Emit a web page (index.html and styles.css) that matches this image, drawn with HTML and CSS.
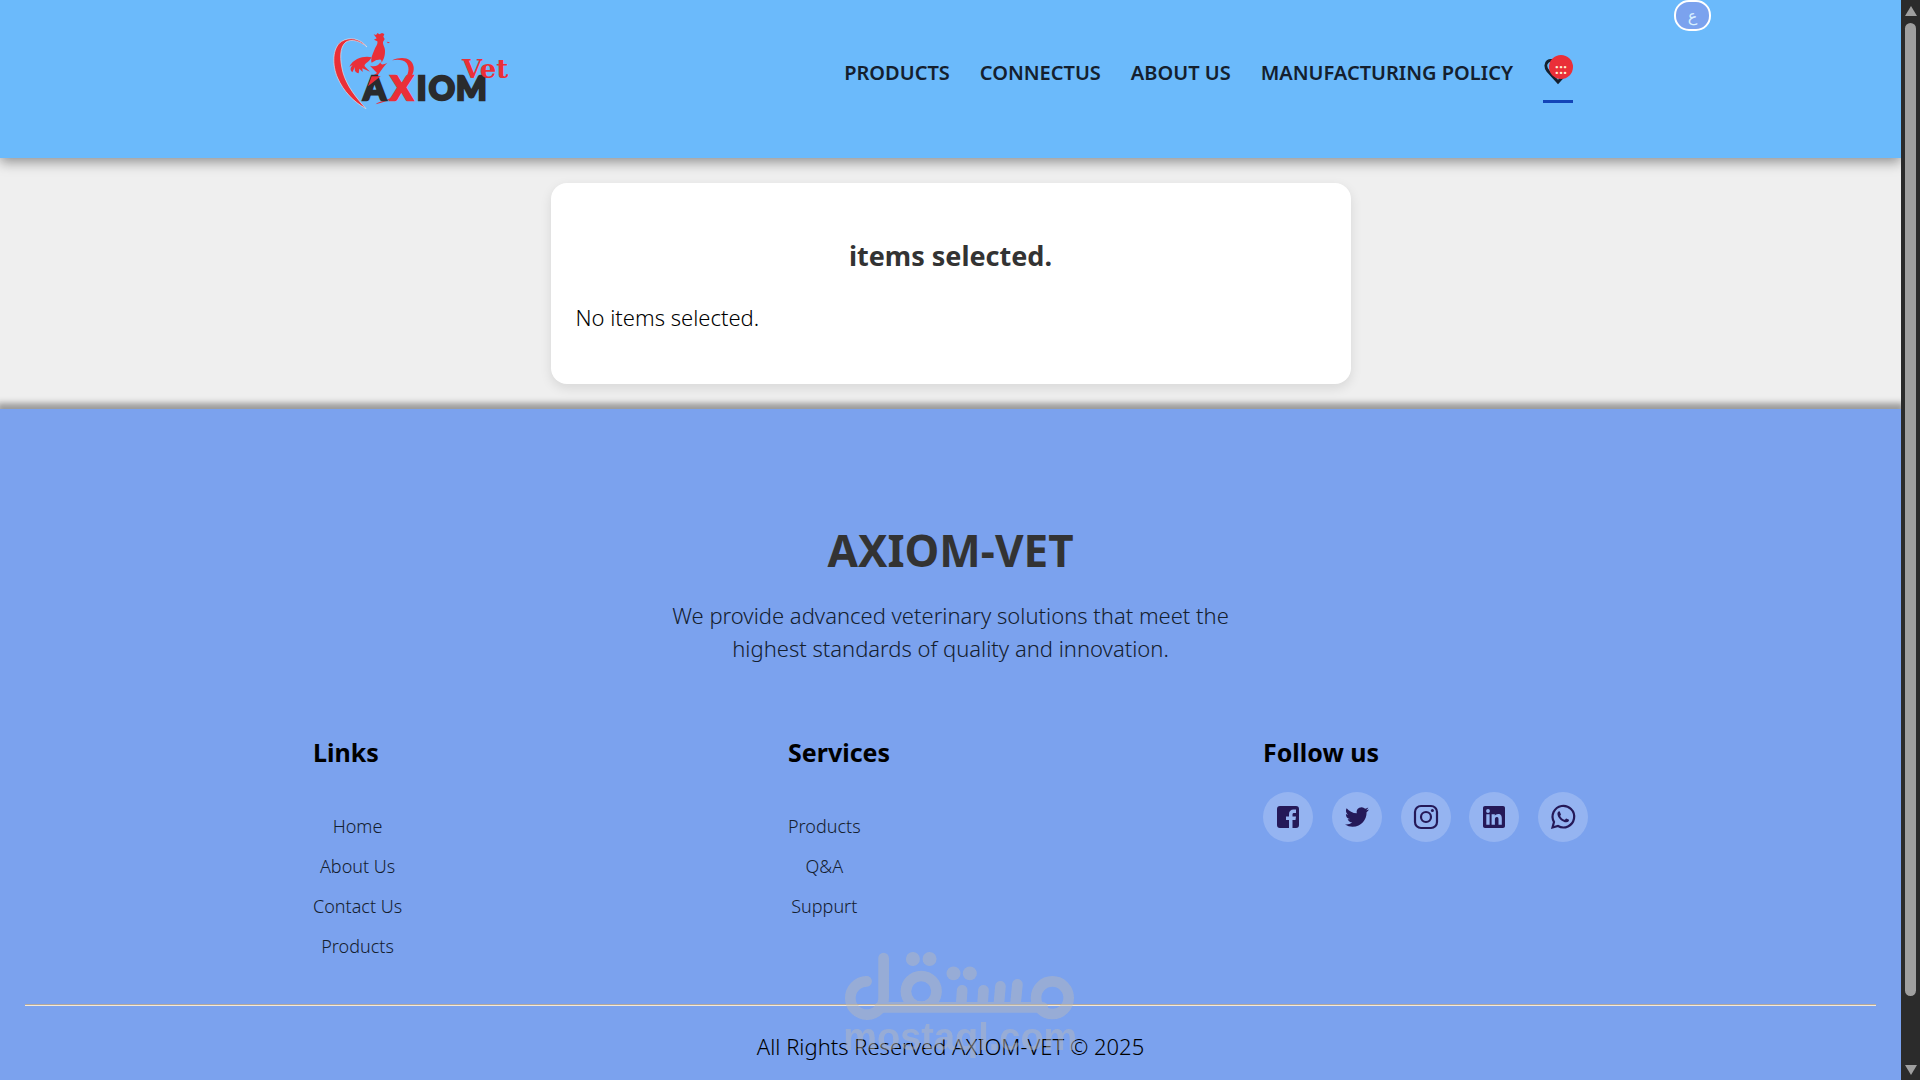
FILE: index.html
```html
<!DOCTYPE html>
<html lang="en">
<head>
<meta charset="utf-8">
<meta name="viewport" content="width=device-width, initial-scale=1">
<title>AXIOM-VET</title>
<link rel="stylesheet" href="styles.css">
</head>
<body>
<div class="page">
  <header class="header">
    <button class="lang" type="button" lang="ar">ع</button>
    <div class="container header-row">
      <a class="logo" href="#" aria-label="Axiom Vet">
        <svg viewBox="57 51 555 255" role="img" aria-hidden="true">
          <path d="M171 111C150 84 118 80 95 94C66 113 66 166 83 204C100 243 130 275 168 296C138 262 111 229 99 188C89 149 88 111 108 96C125 86 149 92 171 111Z" fill="#ea2f38" stroke="#dfe6ee" stroke-width="2"/>
          <path d="M191 73L198 75L203 69L208 73L216 69L223 72L220 80L224 87L219 96C218 106 226 112 225 124C225 141 220 149 215 158C214 143 208 151 199 150L185 158C181 148 187 134 193 120C198 108 204 103 202 94L192 89L200 85Z" fill="#ea2f38"/>
          <path d="M230 95L240 97L234 100Z" fill="#ea2f38"/>
          <path d="M185 142C163 137 132 144 118 170L128 165C119 175 121 181 127 187L135 171C133 182 136 188 146 190L148 176L158 186L157 175L180 185L166 171C157 163 177 158 185 142Z" fill="#ea2f38"/>
          <path d="M180 167C193 171 205 169 211 157C213 167 222 163 232 158C221 169 214 181 203 196L174 229L188 197L201 189Z" fill="#ea2f38"/>
          <path d="M246 151C276 137 307 143 311 171C313 190 302 203 290 218L282 210C296 193 300 175 290 160C281 149 263 148 246 151Z" fill="#ea2f38"/>
          <path d="M197 283C209 270 229 276 245 260L252 263C235 274 216 276 197 283Z" fill="#ea2f38"/>
          <g class="logo-name">
            <text x="160" y="269">A</text>
            <text x="242" y="269" class="logo-red">X</text>
            <text x="320" y="269">I</text>
            <text x="356" y="269">O</text>
            <text x="438" y="269">M</text>
          </g>
          <path d="M174 229L185 199H212Z" fill="#ea2f38"/>
          <text x="456" y="204" class="logo-vet">Vet</text>
        </svg>
      </a>
      <nav class="nav" aria-label="Main">
        <a href="#">PRODUCTS</a>
        <a href="#">CONNECTUS</a>
        <a href="#">ABOUT US</a>
        <a href="#">MANUFACTURING POLICY</a>
        <a class="saved" href="#" aria-label="Selected items">
          <svg viewBox="0 0 30 30" aria-hidden="true"><path d="M15 26L5 15C-1 7 7 0 15 8C23 0 31 7 25 15Z" fill="none" stroke="#14202e" stroke-width="3"/></svg>
          <span class="badge">:::</span>
        </a>
      </nav>
    </div>
  </header>

  <main class="main">
    <section class="card">
      <h2>items selected.</h2>
      <p>No items selected.</p>
    </section>
  </main>

  <footer class="footer">
    <div class="intro">
      <h2>AXIOM-VET</h2>
      <p>We provide advanced veterinary solutions that meet the highest standards of quality and innovation.</p>
    </div>
    <div class="container columns">
      <section>
        <h3>Links</h3>
        <ul class="links">
          <li><a href="#">Home</a></li>
          <li><a href="#">About Us</a></li>
          <li><a href="#">Contact Us</a></li>
          <li><a href="#">Products</a></li>
        </ul>
      </section>
      <section>
        <h3>Services</h3>
        <ul class="links">
          <li><a href="#">Products</a></li>
          <li><a href="#">Q&amp;A</a></li>
          <li><a href="#">Suppurt</a></li>
        </ul>
      </section>
      <section>
        <h3>Follow us</h3>
        <div class="social">
          <a href="#" aria-label="Facebook"><svg viewBox="0 0 24 24"><path fill-rule="evenodd" d="M20 1H4C2 1 1 2 1 4V20C1 22 2 23 4 23H13V15H10V11.500H13V9C13 6 15 4.500 17.500 4.500H20V8H18C17 8 16.500 8.500 16.500 9.500V11.500H20L19.500 15H16.500V23H20C22 23 23 22 23 20V4C23 2 22 1 20 1Z"/></svg></a>
          <a href="#" aria-label="Twitter"><svg viewBox="0 0 24 24"><path d="M23.950 4.570a10 10 0 0 1-2.820.770 4.960 4.960 0 0 0 2.160-2.720c-.950.550-2 .960-3.130 1.180a4.920 4.920 0 0 0-8.380 4.480C7.690 8.090 4.070 6.130 1.640 3.160a4.820 4.820 0 0 0-.670 2.480c0 1.710.870 3.210 2.190 4.100a4.900 4.900 0 0 1-2.230-.620v.060a4.920 4.920 0 0 0 3.950 4.830 5 5 0 0 1-2.210.080 4.940 4.940 0 0 0 4.600 3.420A9.870 9.870 0 0 1 0 19.540a13.990 13.990 0 0 0 7.560 2.210c9.050 0 14-7.500 14-13.980 0-.210 0-.420-.020-.630a9.940 9.940 0 0 0 2.460-2.550z"/></svg></a>
          <a href="#" aria-label="Instagram"><svg viewBox="0 0 24 24"><g fill="none" stroke="currentColor" stroke-width="2.200"><rect x="1" y="1" width="22" height="22" rx="6"/><circle cx="12" cy="12" r="5"/></g><circle cx="18.400" cy="5.600" r="1.500"/></svg></a>
          <a href="#" aria-label="LinkedIn"><svg viewBox="0 0 24 24"><path fill-rule="evenodd" d="M3 1H21C22.200 1 23 1.800 23 3V21C23 22.200 22.200 23 21 23H3C1.800 23 1 22.200 1 21V3C1 1.800 1.800 1 3 1ZM4.300 9.300H7.600V19.800H4.300ZM6 4.100A1.900 1.900 0 1 0 6 7.900A1.900 1.900 0 1 0 6 4.100ZM9.600 9.300H12.800V10.800C13.500 9.700 14.600 9 16.100 9C19.100 9 19.800 11 19.800 13.600V19.800H16.500V14.400C16.500 13 16.400 11.900 14.900 11.900C13.400 11.900 12.900 13 12.900 14.400V19.800H9.600Z"/></svg></a>
          <a href="#" aria-label="WhatsApp"><svg viewBox="0 0 24 24"><path d="M1.500 22.500L3 17A10.800 10.800 0 1 1 7 21Z" fill="none" stroke="currentColor" stroke-width="2.200"/><path d="M8.600 6.200C8 5.900 6.500 6.600 6.400 8.700C6.500 13 11.500 17.300 15.300 17.300C17.300 17.200 18.200 15.800 18 14.700L15.300 13.400C14.500 13.700 14.300 14.800 13.500 14.800C11.600 14.300 9.700 12.400 9.200 11C9.200 10.300 10.100 9.900 9.900 9.200Z"/></svg></a>
        </div>
      </section>
    </div>
    <div class="legal">
      <hr>
      <p>All Rights Reserved AXIOM-VET © 2025</p>
    </div>
  </footer>
</div>

<div class="scrollbar" aria-hidden="true">
  <span class="arrow up"></span>
  <span class="thumb"></span>
  <span class="arrow down"></span>
</div>

<svg class="watermark" viewBox="310 60 700 330" aria-hidden="true">
  <g fill="none" stroke="#bababa" stroke-width="32" stroke-linecap="round">
    <path d="M432 84V203A50 50 0 1 1 381 154"/>
    <circle cx="545" cy="184" r="46"/>
    <circle cx="939" cy="203" r="49"/>
    <path d="M420 232H910M668 181L665 225M732 181L729 225M783 169L778 225M834 163L828 225"/>
  </g>
  <g fill="#bababa">
    <circle cx="520" cy="87" r="21"/><circle cx="570" cy="87" r="21"/>
    <circle cx="642" cy="130" r="21"/><circle cx="691" cy="130" r="21"/>
    <text x="311" y="360">mostaql.com</text>
  </g>
</svg>
</body>
</html>
```
FILE: styles.css
```css
* {
  box-sizing: border-box;
}

body {
  display: flex;
  height: 100vh;
  margin: 0;
  overflow: hidden;
  background: #efefef;
  color: #000;
  font: 300 22px/33px "Noto Sans", "Open Sans", sans-serif;
}

h2, h3, p, ul {
  margin: 0;
  padding: 0;
}

a {
  color: inherit;
  text-decoration: none;
}

.page {
  flex: 1;
  display: flex;
  flex-direction: column;
  min-width: 0;
  overflow: hidden;
}

.container {
  width: 90%;
  max-width: 1275px;
  margin: 0 auto;
}

/* Header */
.header {
  position: relative;
  flex: none;
  padding: 27px 0 46px;
  background: #6bbafb;
  box-shadow: 0 4px 12px rgba(0, 0, 0, 0.4);
}

.header-row {
  display: flex;
  justify-content: space-between;
  align-items: flex-start;
  padding: 0 15px 0 16px;
}

.logo svg {
  display: block;
  width: 185px;
  height: 85px;
}

.logo-name {
  fill: #2a2b2d;
  stroke: #2a2b2d;
  stroke-width: 7;
  font: 900 97px "Lato", sans-serif;
}

.logo-name .logo-red {
  fill: #ea2f38;
  stroke: #ea2f38;
}

.logo-vet {
  fill: #ea2f38;
  font: 700 78px "DejaVu Serif", serif;
}

.nav {
  display: flex;
  gap: 30px;
  padding-top: 29px;
  color: #14202e;
  font-size: 20px;
  font-weight: 600;
}

.saved {
  position: relative;
  width: 30px;
  height: 47px;
  border-bottom: 3px solid #1345b8;
}

.saved svg {
  display: block;
  width: 30px;
  height: 30px;
}

.badge {
  position: absolute;
  top: -1px;
  right: 0;
  width: 24px;
  height: 24px;
  border-radius: 50%;
  background: #ea2f38;
  color: #fff3d6;
  font-size: 15px;
  line-height: 26px;
  text-align: center;
}

.lang {
  position: absolute;
  top: 0;
  right: 10%;
  width: 37px;
  height: 31px;
  padding: 0;
  border: 2px solid #fff;
  border-radius: 15px;
  background: #7ba2ee;
  color: #d8f0ff;
  font: 400 16px "DejaVu Sans", sans-serif;
}

/* Selected items */
.main {
  flex: none;
  padding: 25px 24px;
}

.card {
  max-width: 800px;
  margin: 0 auto;
  padding: 53px 25px 50px;
  border-radius: 16px;
  background: #fff;
  box-shadow: 0 4px 12px rgba(0, 0, 0, 0.1);
}

.card h2 {
  margin-bottom: 25px;
  color: #333;
  font-size: 27px;
  line-height: 40px;
  text-align: center;
}

/* Footer */
.footer {
  flex: 1 0 auto;
  padding: 109px 25px 24px;
  background: #7ba2ee;
  box-shadow: 0 -3px 6px 3px rgba(0, 0, 0, 0.35);
}

.intro {
  max-width: 600px;
  margin: 0 auto 69px;
  color: #14202e;
  text-align: center;
}

.intro h2 {
  margin-bottom: 17px;
  color: #333;
  font-size: 44px;
  line-height: 64px;
}

.columns {
  display: grid;
  grid-template-columns: repeat(3, 1fr);
  gap: 150px;
}

.columns h3 {
  font-size: 25px;
  line-height: 36px;
}

.links {
  width: max-content;
  margin-top: 36px;
  color: #14202e;
  font-size: 18px;
  line-height: 40px;
  list-style: none;
  text-align: center;
}

.social {
  display: flex;
  justify-content: space-between;
  margin-top: 22px;
}

.social a {
  display: grid;
  place-items: center;
  width: 50px;
  height: 50px;
  border-radius: 50%;
  background: rgba(255, 255, 255, 0.2);
  color: #251958;
}

.social svg {
  width: 24px;
  height: 24px;
  overflow: visible;
  fill: currentColor;
}

.legal {
  margin-top: 38px;
  text-align: center;
}

.legal hr {
  height: 2px;
  margin: 0 0 24px;
  border: 0;
  border-top: 1px solid #b5a89a;
  border-bottom: 1px solid #f3ead9;
}

/* Scrollbar */
.scrollbar {
  flex: none;
  display: flex;
  flex-direction: column;
  align-items: center;
  width: 19px;
  padding: 6px 0 5px;
  background: #2b2b2b;
}

.thumb {
  width: 11px;
  height: 91%;
  margin: 7px 0 auto;
  border-radius: 6px;
  background: #9f9f9f;
}

.arrow {
  border: 6px solid transparent;
}

.up {
  border-top: 0;
  border-bottom: 10px solid #9f9f9f;
}

.down {
  border-bottom: 0;
  border-top: 10px solid #9f9f9f;
}

.watermark {
  position: fixed;
  bottom: 20px;
  left: 50%;
  width: 233px;
  height: 110px;
  margin-left: -117px;
  overflow: visible;
  opacity: 0.46;
  pointer-events: none;
}

.watermark text {
  font: 700 114px "Liberation Sans", sans-serif;
}
```
